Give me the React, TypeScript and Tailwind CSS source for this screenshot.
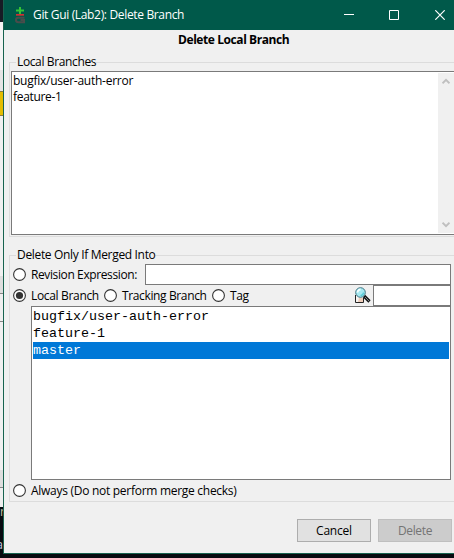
import type { ReactNode } from "react";

const UI = "font-['Open_Sans','Noto_Sans',sans-serif]";

function Radio({ checked = false }: { checked?: boolean }) {
  return (
    <svg width="13" height="13" viewBox="0 0 13 13" className="shrink-0">
      <circle cx="6.5" cy="6.5" r="5.9" fill="#fff" stroke="#333" strokeWidth="1.1" />
      {checked && <circle cx="6.5" cy="6.5" r="3.6" fill="#333" />}
    </svg>
  );
}

function Group({ title, titleClass, className, children }: { title: string; titleClass: string; className: string; children: ReactNode }) {
  return (
    <fieldset className={`ml-[5px] min-w-0 border border-r-0 border-[#dcdcdc] ${className}`}>
      <legend className={`h-4 leading-4 whitespace-nowrap ${titleClass}`}>{title}</legend>
      {children}
    </fieldset>
  );
}

function Chevron({ up = false }: { up?: boolean }) {
  return (
    <svg width="8" height="7" viewBox="0 0 8 7" fill="none" stroke="#bfbfbf" strokeWidth="2">
      <path d={up ? "M.5 5.3 4 1.8l3.5 3.5" : "M.5 1.7 4 5.2l3.5-3.5"} />
    </svg>
  );
}

function GitIcon() {
  return (
    <svg width="12" height="18" viewBox="0 0 12 18" className="shrink-0">
      <path d="M5 1h2v2.500h3v2H7V8H5V5.500H2v-2h3z" fill="#33c436" />
      <path d="M2 8h8v1.700H2z" fill="#d32e30" />
      <path d="M10.500 11.700H4.500Q2 11.700 2 14t2.500 2.300H10V14H6.500" fill="none" stroke="#4a4c4b" strokeWidth="2" />
    </svg>
  );
}

function SearchIcon() {
  return (
    <svg width="17" height="17" viewBox="0 0 17 17" className="shrink-0">
      <path d="M1 3v13h8V9z" fill="#f6f3f0" />
      <path d="M5 11h4v4H4z" fill="#efcdb9" />
      <path d="M1.500 8v7.500H9.500V11" fill="none" stroke="#222" />
      <path d="m10 9 5.500 5.500" stroke="#151515" strokeWidth="3.200" />
      <path d="m11 10 4 4" stroke="#818a8d" strokeWidth="1" />
      <circle cx="6.500" cy="5.500" r="4.800" fill="#a6e9f1" stroke="#3e7280" />
      <path d="M3.500 5.500a3 3 0 0 1 3-3" fill="none" stroke="#f5ffff" strokeWidth="1.800" />
      <path d="M9.500 5.500a3 3 0 0 1-3 3" fill="none" stroke="#59cbd7" strokeWidth="1.500" />
    </svg>
  );
}

export default function App() {
  return (
    <div className={`flex h-[558px] w-[454px] overflow-hidden bg-[#080b10] text-[12px] text-black ${UI}`}>
      <div className="flex w-[3px] shrink-0 flex-col overflow-hidden">
        <div className="h-[22px] bg-[#171b25]" />
        <div className="h-12 bg-[#f4f4f4]" />
        <div className="h-[21px] bg-[#e5e5e5]" />
        <div className="h-[25px] border-y border-[#8b7b3c] bg-[#e4bd00]" />
        <div className="h-[160px] bg-[#f0f0f0]" />
        <div className="h-[17px] bg-[#dedede]" />
        <div className="h-[29px] border-y border-[#858585] bg-[#efefef]" />
        <div className="h-[148px] bg-[#f0f0f0]" />
        <div className="h-[17px] bg-[#dedede]" />
        <div className="h-5 border-t border-[#858585] bg-[#efefef]" />
        <div className="h-[30px] leading-[10px] text-[#c9c4a4]">r</div>
        <div className="flex h-5 justify-end leading-4 text-[#c3cbe0]">a</div>
      </div>
      <main className="h-[554px] w-[451px] shrink-0 border-b border-l border-[#17634f] bg-[#f0f0f0]">
        <header className="flex h-[30px] items-center bg-[#00594a] pl-[10px] text-white">
          <GitIcon />
          <span className="ml-[7px] w-[160px] whitespace-nowrap tracking-[-0.34px]">Git Gui (Lab2): Delete Branch</span>
          <svg width="10" height="10" viewBox="0 0 10 10" className="ml-[151px] shrink-0" stroke="#fff"><path d="M0 4.500h10" /></svg>
          <svg width="10" height="10" viewBox="0 0 10 10" className="ml-[35px] shrink-0" fill="none" stroke="#fff"><path d="M.5.5h9v9h-9z" /></svg>
          <svg width="10" height="10" viewBox="0 0 10 10" className="ml-[36px] shrink-0" stroke="#fff" strokeWidth="1.200"><path d="m.3.3 9.400 9.400M9.700.3.3 9.700" /></svg>
        </header>
        <h1 className="h-6 pl-[174px] text-[12px] leading-5 font-bold tracking-[-0.42px] whitespace-nowrap">Delete Local Branch</h1>
        <Group title="Local Branches" titleClass="ml-[5px] pl-px tracking-[-0.37px]" className="h-[183px] pl-px">
          <div className="mt-px flex h-[164px] border border-r-0 border-[#7a7a7a] bg-white">
            <ul className="flex-1 pt-px pl-px leading-4 whitespace-nowrap">
              <li className="tracking-[-0.26px]">bugfix/user-auth-error</li>
              <li className="tracking-[-0.32px]">feature-1</li>
            </ul>
            <div className="my-px flex w-4 flex-col items-center justify-between bg-[#f0f0f0] py-[5px]">
              <Chevron up />
              <Chevron />
            </div>
          </div>
        </Group>
        <Group title="Delete Only If Merged Into" titleClass="ml-[3px] pl-px tracking-[-0.33px]" className="mt-[10px] h-[255px] pl-[3px]">
          <div className="mt-px flex h-[21px] items-center whitespace-nowrap">
            <Radio />
            <span className="ml-[5px] w-[114px] tracking-[-0.39px]">Revision Expression:</span>
            <div className="h-[21px] w-[306px] border border-[#7a7a7a] bg-white" />
          </div>
          <div className="flex h-[21px] items-center whitespace-nowrap">
            <Radio checked />
            <span className="ml-[5px] w-[73px] tracking-[-0.33px]">Local Branch</span>
            <Radio />
            <span className="ml-[5px] w-[90px] tracking-[-0.37px]">Tracking Branch</span>
            <Radio />
            <span className="ml-[5px] w-[124px] tracking-[-0.4px]">Tag</span>
            <SearchIcon />
            <div className="ml-[2px] h-[21px] w-[78px] border border-[#7a7a7a] bg-white" />
          </div>
          <ul className="ml-[18px] h-[174px] w-[420px] border border-[#7a7a7a] bg-white p-px font-['Liberation_Mono',monospace] text-[13.330px] leading-[17px] whitespace-nowrap">
            <li>bugfix/user-auth-error</li>
            <li>feature-1</li>
            <li className="bg-[#0078d7] text-white">master</li>
          </ul>
          <div className="flex h-[21px] items-center whitespace-nowrap">
            <Radio />
            <span className="ml-[5px] tracking-[-0.28px]">Always (Do not perform merge checks)</span>
          </div>
        </Group>
        <footer className="mt-[17px] flex gap-[7px] pl-[293px]">
          <button className="h-[23px] w-[74px] border border-[#adadad] bg-[#e1e1e1] tracking-[-0.2px]">Cancel</button>
          <button className="h-[23px] w-[74px] border border-[#bfbfbf] bg-[#cccccc] tracking-[-0.35px] text-[#747474]" disabled>Delete</button>
        </footer>
      </main>
    </div>
  );
}
